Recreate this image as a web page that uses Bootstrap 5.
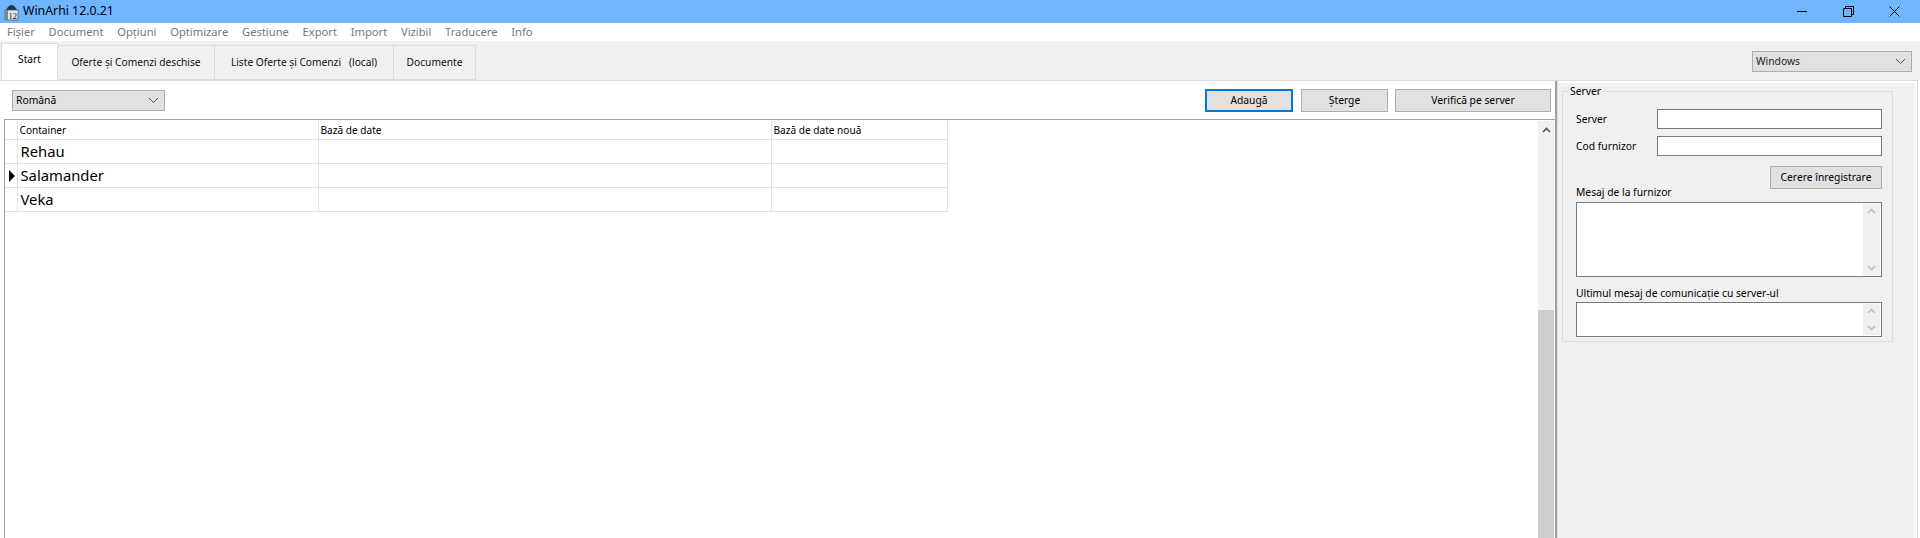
<!DOCTYPE html>
<html lang="ro">
<head>
<meta charset="utf-8">
<title>WinArhi 12.0.21</title>
<link href="https://cdn.jsdelivr.net/npm/bootstrap@5.3.0/dist/css/bootstrap.min.css" rel="stylesheet">
<style>
html,body{height:538px;overflow:hidden}
body{font-family:"Noto Sans","Open Sans",sans-serif;font-size:10.300px;color:#000;background:#fff;line-height:1.2;width:1920px}
.titlebar{height:23px;background:#70b5ff;padding-left:4px;font-size:12.300px;color:#000}
.app-ico{width:15px;height:18px;margin-right:4px}
.wincontrols{margin-left:auto;padding-right:20px;gap:35px}
.menubar{height:18px;background:#fff;padding-left:7px;gap:13.700px;font-size:11.200px;color:#777}
.tabstrip{height:39px;background:#f0f0f0;padding-left:1px;padding-right:8px;position:relative}
.winarhi-tabs{border:0;align-items:flex-end;height:39px;flex-wrap:nowrap}
.winarhi-tabs .nav-link{height:35px;margin:0 0 0 -1px;padding:0;border:1px solid #dcdcdc;border-radius:0;background:#f0f0f0;color:#111;font-size:10.200px;display:flex;align-items:center;justify-content:center}
.winarhi-tabs .nav-link.active{height:37px;background:#fff;border-color:#dcdcdc;border-bottom-color:#fff;margin-left:0;color:#000;padding-bottom:4px;position:relative;z-index:1}
.tw1{width:57px}.tw2{width:158px}.tw3{width:180px}.tw4{width:83px}
.sel-box{display:flex;align-items:center;justify-content:space-between;background:#e1e1e1;border:1px solid #adadad;height:21px;padding:0 5px 0 3px;color:#000}
.sel-win{width:160px;margin-top:10px;color:#222}
.sel-lang{width:153px;margin-top:1px}
.mainarea{height:458px;width:1918px;background:#fff;border-top:1px solid #dcdcdc;border-right:1px solid #dcdcdc}
.leftpane{flex:none;width:1555px;background:#fff;padding:8px 0 0 0}
.toolbar{padding:0 4px 0 12px;height:31px}
.winbtn{--bs-btn-padding-y:0;--bs-btn-padding-x:0;--bs-btn-font-size:10.300px;--bs-btn-bg:#e1e1e1;--bs-btn-border-color:#adadad;--bs-btn-color:#000;--bs-btn-border-radius:0;--bs-btn-hover-bg:#e1e1e1;--bs-btn-hover-border-color:#adadad;height:23px;line-height:1}
.winbtn-default{border:2px solid #0078d7}
.bw1{width:88px;margin-right:8px}.bw2{width:87px;margin-right:7px}.bw3{width:156px}
.gridwrap{margin-left:4px;border-top:1px solid #a0a0a0;border-left:1px solid #a0a0a0;height:419px;padding-top:1px}
.datagrid{width:942px;table-layout:fixed;margin:0;border-collapse:collapse;align-self:flex-start}
.datagrid>*>tr>*{padding:0 0 0 2px;border:0;border-right:1px solid #e4e4e4;border-bottom:1px solid #e4e4e4;background:#fff;box-shadow:none;vertical-align:middle;white-space:nowrap;color:#000}
.datagrid thead th{height:18px;font-weight:400;font-size:10.100px;padding-top:1px}
.datagrid tbody td{height:24px;font-size:14.800px;padding-top:1px;padding-left:3px}
.datagrid .rowhead,.datagrid tbody .rowhead{padding:0;text-align:center}
.caret-mark{display:inline-block;width:0;height:0;border-left:6px solid #000;border-top:6px solid transparent;border-bottom:6px solid transparent;vertical-align:middle;margin-left:2px}
.vscroll{width:16px;background:#f0f0f0;height:417px;margin-left:auto;margin-right:1px}
.sc-btn{height:17px;flex:none}
.sc-track{height:172px;flex:none}
.sc-thumb{flex:1;background:#cdcdcd}
.splitter{flex:none;width:3px;background:#a0a0a0;border-right:1px solid #ddd}
.rightpane{flex:none;width:357px;background:#f0f0f0;margin:2px 2px 0 0;padding:2px 22px 0 4px}
.srv-box{border:1px solid #dcdcdc;height:251px;margin-top:6px;padding:17px 10px 0 13px;position:relative}
.srv-title{position:absolute;left:6px;top:-8px;background:#f0f0f0;padding:0 1px;line-height:14px;margin:0}
.frm-row{height:20px;margin-bottom:7px}
.frm-row label{width:81px;margin:0;color:#000}
.winput{flex:1;height:20px;border:1px solid #7a7a7a;background:#fff;border-radius:0;padding:0;min-height:0}
.btn-cere{width:112px;height:23px;display:block;margin:10px 0 0 auto}
.frm-cap{margin:-4px 0 3px;height:14px;line-height:14px;color:#000}
.frm-cap-2{margin:9px 0 2px}
.memo{height:75px;border:1px solid #7a7a7a;background:#fff;padding:1px}
.memo-sm{height:35px}
.memo-bar{width:17px;margin-left:auto;height:100%;background:#f0f0f0}
.ar{width:11px;height:7px;display:block}
</style>
</head>
<body class="d-flex flex-column">
<header class="titlebar d-flex align-items-center">
  <svg class="app-ico" viewBox="0 0 15 18" aria-hidden="true"><path d="M2 7 Q7.500 -3 13 7Z" fill="#1d3557"/><rect x="1" y="7" width="13" height="10" fill="#dfe4ea" stroke="#555" stroke-width=".7"/><rect x="1" y="7" width="3" height="10" fill="#7b8794"/><text x="4.500" y="16" font-size="8.500" font-family="Liberation Serif,serif" fill="#111">12</text></svg>
  <span>WinArhi 12.0.21</span>
  <div class="wincontrols d-flex align-items-center">
    <svg width="11" height="11" viewBox="0 0 11 11" aria-hidden="true"><path d="M0 5.500H10" stroke="#000" fill="none"/></svg>
    <svg width="11" height="11" viewBox="0 0 11 11" aria-hidden="true"><path d="M.5 2.500h8v8h-8zM2.500 2.500v-2h8v8h-2" stroke="#000" fill="none"/></svg>
    <svg width="11" height="11" viewBox="0 0 11 11" aria-hidden="true"><path d="M.5.5l10 10M10.500.5l-10 10" stroke="#000" fill="none"/></svg>
  </div>
</header>
<nav class="menubar d-flex align-items-center">
  <span>Fișier</span><span>Document</span><span>Opțiuni</span><span>Optimizare</span><span>Gestiune</span><span>Export</span><span>Import</span><span>Vizibil</span><span>Traducere</span><span>Info</span>
</nav>
<div class="tabstrip d-flex justify-content-between">
  <ul class="nav nav-tabs winarhi-tabs">
    <li class="nav-item"><a class="nav-link active tw1" href="#">Start</a></li>
    <li class="nav-item"><a class="nav-link tw2" href="#">Oferte și Comenzi deschise</a></li>
    <li class="nav-item"><a class="nav-link tw3" href="#">Liste Oferte și Comenzi&nbsp;&nbsp;&nbsp;(local)</a></li>
    <li class="nav-item"><a class="nav-link tw4" href="#">Documente</a></li>
  </ul>
  <div class="sel-box sel-win"><span>Windows</span>
    <svg class="ar" viewBox="0 0 11 7" aria-hidden="true"><path d="M1 1l4.500 4.500L10 1" stroke="#555" fill="none"/></svg></div>
</div>
<main class="mainarea d-flex">
  <section class="leftpane d-flex flex-column">
    <div class="toolbar d-flex align-items-start">
      <div class="sel-box sel-lang"><span>Română</span>
        <svg class="ar" viewBox="0 0 11 7" aria-hidden="true"><path d="M1 1l4.500 4.500L10 1" stroke="#555" fill="none"/></svg></div>
      <button type="button" class="btn winbtn winbtn-default bw1 ms-auto">Adaugă</button>
      <button type="button" class="btn winbtn bw2">Șterge</button>
      <button type="button" class="btn winbtn bw3">Verifică pe server</button>
    </div>
    <div class="gridwrap d-flex">
      <table class="table datagrid">
        <colgroup><col style="width:12px"><col style="width:301px"><col style="width:453px"><col style="width:176px"></colgroup>
        <thead><tr><th class="rowhead"></th><th>Container</th><th>Bază de date</th><th>Bază de date nouă</th></tr></thead>
        <tbody>
          <tr><td class="rowhead"></td><td>Rehau</td><td></td><td></td></tr>
          <tr><td class="rowhead"><span class="caret-mark"></span></td><td>Salamander</td><td></td><td></td></tr>
          <tr><td class="rowhead"></td><td>Veka</td><td></td><td></td></tr>
        </tbody>
      </table>
      <div class="vscroll d-flex flex-column">
        <div class="sc-btn d-flex align-items-center justify-content-center"><svg width="9" height="6" viewBox="0 0 9 6" aria-hidden="true"><path d="M1 5l3.500-3.500L8 5" stroke="#505050" stroke-width="1.600" fill="none"/></svg></div>
        <div class="sc-track"></div>
        <div class="sc-thumb"></div>
      </div>
    </div>
  </section>
  <div class="splitter"></div>
  <aside class="rightpane">
    <div class="srv-box">
      <p class="srv-title">Server</p>
      <div class="frm-row d-flex align-items-center"><label>Server</label><input class="winput" type="text"></div>
      <div class="frm-row d-flex align-items-center"><label>Cod furnizor</label><input class="winput" type="text"></div>
      <button type="button" class="btn winbtn btn-cere">Cerere înregistrare</button>
      <p class="frm-cap">Mesaj de la furnizor</p>
      <div class="memo">
        <div class="memo-bar d-flex flex-column justify-content-between align-items-center py-1">
          <svg width="9" height="6" viewBox="0 0 9 6" aria-hidden="true"><path d="M1 5l3.500-3.500L8 5" stroke="#c0c0c0" stroke-width="1.600" fill="none"/></svg>
          <svg width="9" height="6" viewBox="0 0 9 6" aria-hidden="true"><path d="M1 1l3.500 3.500L8 1" stroke="#c0c0c0" stroke-width="1.600" fill="none"/></svg>
        </div>
      </div>
      <p class="frm-cap frm-cap-2">Ultimul mesaj de comunicație cu server-ul</p>
      <div class="memo memo-sm">
        <div class="memo-bar d-flex flex-column justify-content-between align-items-center py-1">
          <svg width="9" height="6" viewBox="0 0 9 6" aria-hidden="true"><path d="M1 5l3.500-3.500L8 5" stroke="#c0c0c0" stroke-width="1.600" fill="none"/></svg>
          <svg width="9" height="6" viewBox="0 0 9 6" aria-hidden="true"><path d="M1 1l3.500 3.500L8 1" stroke="#c0c0c0" stroke-width="1.600" fill="none"/></svg>
        </div>
      </div>
    </div>
  </aside>
</main>
<script src="https://cdn.jsdelivr.net/npm/bootstrap@5.3.0/dist/js/bootstrap.bundle.min.js"></script>
</body>
</html>
